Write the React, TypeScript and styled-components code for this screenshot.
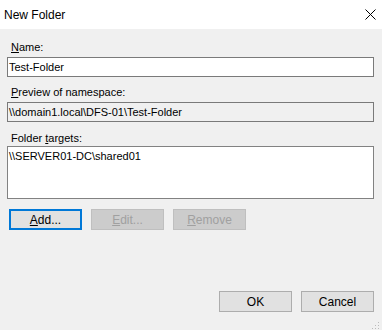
import styled, {createGlobalStyle} from "styled-components";

const GlobalStyle = createGlobalStyle`
    html, body {
        margin: 0;
        padding: 0;
        background: #f0f0f0;
    }
    body {
        font-family: "Liberation Sans", Arial, sans-serif;
        font-size: 11px;
        color: #000;
    }
`;

const Dialog = styled.div`
    width: 382px;
    height: 330px;
    display: flex;
    flex-direction: column;
    background: #f0f0f0;
    position: relative;
    overflow: hidden;
`;

const TitleBar = styled.div`
    height: 29px;
    flex: none;
    background: #fff;
    display: flex;
    align-items: center;
    justify-content: space-between;
    padding: 0 6px 0 4px;
`;

const Title = styled.span`
    font-size: 12px;
    color: #000;
`;

const Body = styled.div`
    flex: 1;
    display: flex;
    flex-direction: column;
    padding: 11px 8px 0 7px;
`;

const Label = styled.label<{ $top?: number; $bottom?: number }>`
    display: block;
    line-height: 14px;
    height: 14px;
    padding-left: 4px;
    margin-top: ${p => p.$top ?? 0}px;
    margin-bottom: ${p => p.$bottom ?? 3}px;
    color: #000;
`;

const Underlined = styled.span`
    text-decoration: underline;
    text-underline-offset: 1px;
`;

const TextBox = styled.div<{ $readOnly?: boolean }>`
    height: 20px;
    box-sizing: border-box;
    border: 1px solid #7a7a7a;
    background: ${p => p.$readOnly ? "#f0f0f0" : "#fff"};
    padding: 0 1px;
    line-height: 18px;
    white-space: nowrap;
`;

const ListBox = styled.div`
    height: 53px;
    box-sizing: border-box;
    border: 1px solid #828282;
    background: #fff;
    padding: 2px 1px;
    line-height: 14px;
`;

const ButtonRow = styled.div<{ $align?: string; $top: number; $gap: number }>`
    display: flex;
    justify-content: ${p => p.$align ?? "flex-start"};
    gap: ${p => p.$gap}px;
    margin-top: ${p => p.$top}px;
    padding-left: 2px;
`;

const Button = styled.div<{ $variant?: "default" | "disabled" | "normal" }>`
    width: 73px;
    height: 21px;
    box-sizing: border-box;
    display: flex;
    align-items: center;
    justify-content: center;
    font-size: 12px;
    border: ${p => p.$variant === "default" ? "2px solid #0078d7" : "1px solid " + (p.$variant === "disabled" ? "#bfbfbf" : "#adadad")};
    background: ${p => p.$variant === "disabled" ? "#cccccc" : "#e1e1e1"};
    color: ${p => p.$variant === "disabled" ? "#a0a0a0" : "#000"};
`;

const Grip = styled.div`
    position: absolute;
    right: 2px;
    bottom: 2px;
    width: 8px;
    height: 8px;
`;

export default function App(){
    return(
        <Dialog>
            <GlobalStyle/>
            <TitleBar>
                <Title>New Folder</Title>
                <svg width="11" height="11" viewBox="0 0 11 11">
                    <path d="M0.5 0.5 L10.5 10.5 M10.5 0.5 L0.5 10.5" stroke="#000" strokeWidth="1" fill="none"/>
                </svg>
            </TitleBar>
            <Body>
                <Label><Underlined>N</Underlined>ame:</Label>
                <TextBox>Test-Folder</TextBox>
                <Label $top={8}><Underlined>P</Underlined>review of namespace:</Label>
                <TextBox $readOnly>\\domain1.local\DFS-01\Test-Folder</TextBox>
                <Label $top={9} $bottom={1}>Folder <Underlined>t</Underlined>argets:</Label>
                <ListBox>\\SERVER01-DC\shared01</ListBox>
                <ButtonRow $top={10} $gap={9}>
                    <Button $variant="default"><span><Underlined>A</Underlined>dd...</span></Button>
                    <Button $variant="disabled"><span><Underlined>E</Underlined>dit...</span></Button>
                    <Button $variant="disabled"><span><Underlined>R</Underlined>emove</span></Button>
                </ButtonRow>
                <ButtonRow $align="flex-end" $top={61} $gap={9}>
                    <Button>OK</Button>
                    <Button>Cancel</Button>
                </ButtonRow>
            </Body>
            <Grip>
                <svg width="8" height="8" viewBox="0 0 8 8">
                    <rect x="6" y="0" width="1" height="1" fill="#bbb"/>
                    <rect x="3" y="3" width="1" height="1" fill="#bbb"/>
                    <rect x="6" y="3" width="1" height="1" fill="#bbb"/>
                    <rect x="0" y="6" width="1" height="1" fill="#bbb"/>
                    <rect x="3" y="6" width="1" height="1" fill="#bbb"/>
                    <rect x="6" y="6" width="1" height="1" fill="#bbb"/>
                </svg>
            </Grip>
        </Dialog>
    );
}
